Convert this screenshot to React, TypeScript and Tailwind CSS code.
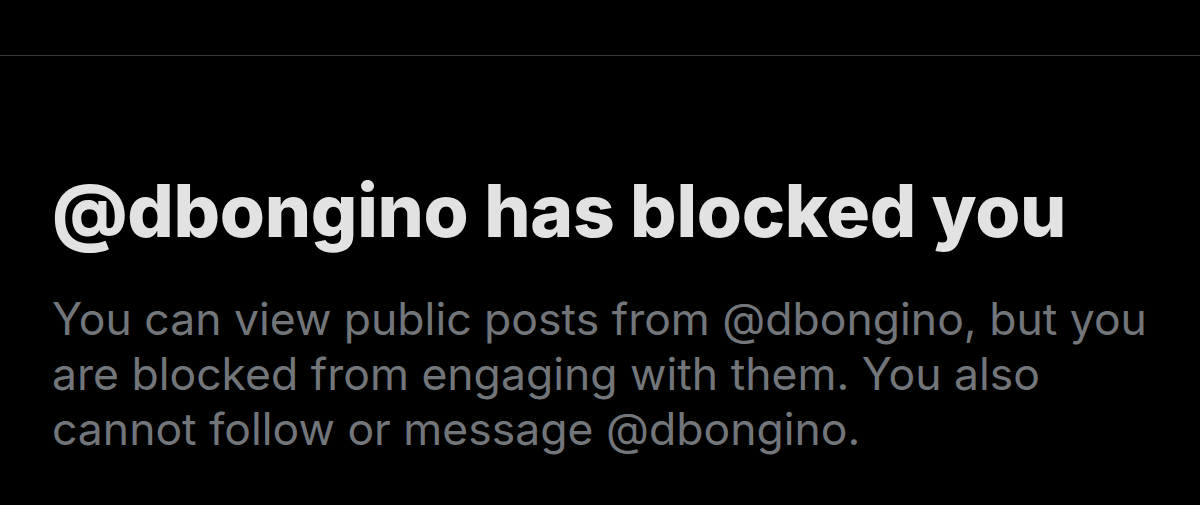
export default function App() {
  return (
    <div className="h-[505px] w-[1200px] overflow-hidden bg-black font-['Inter',sans-serif]">
      <div className="h-[56px] border-b border-[#3a3a3a]" />
      <div className="pl-[52px] pr-[40px] pt-[115px]">
        <h1 className="text-[73px] font-extrabold leading-[80px] tracking-[-0.3px] text-[#e2e2e2]">
          @dbongino has blocked you
        </h1>
        <p className="mt-[41px] text-[44.5px] leading-[55px] text-[#72767b]">
          You can view public posts from @dbongino, but you are blocked from engaging with them. You also cannot follow or message @dbongino.
        </p>
      </div>
    </div>
  )
}
